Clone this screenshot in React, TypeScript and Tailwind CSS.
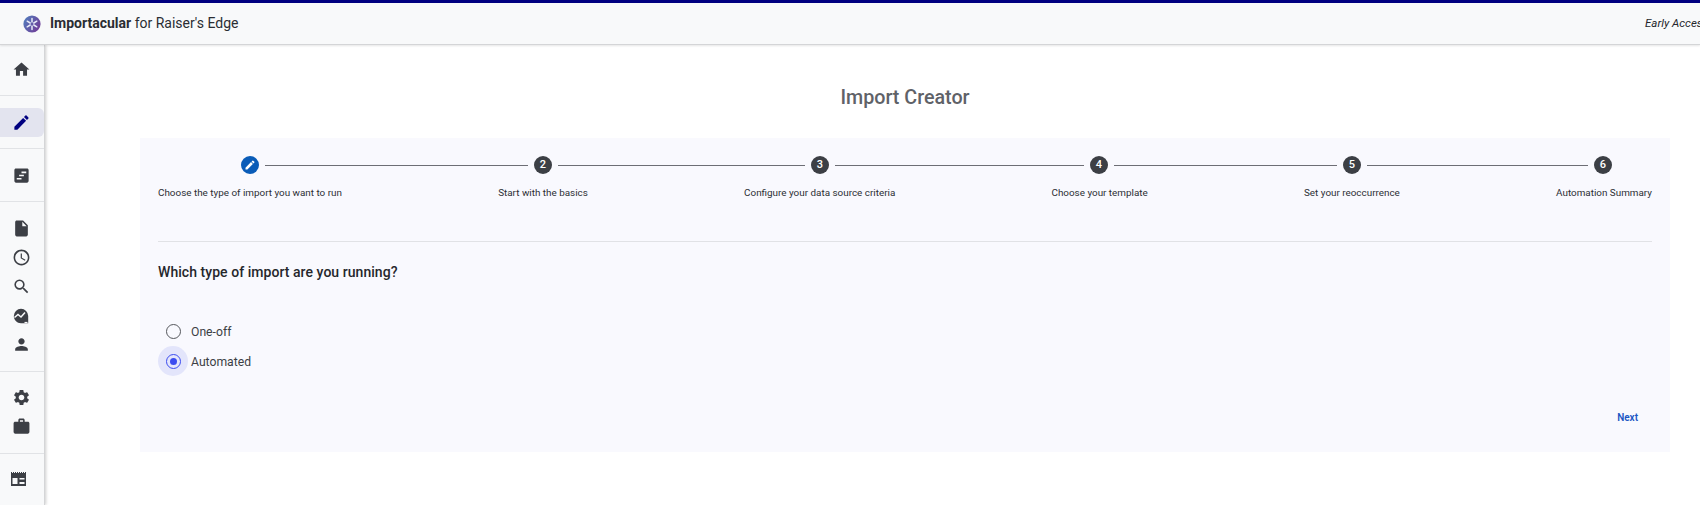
import React from 'react';
import {
  MdHome,
  MdEdit,
  MdViewTimeline,
  MdInsertDriveFile,
  MdAccessTime,
  MdSearch,
  MdPerson,
  MdSettings,
  MdWork,
} from 'react-icons/md';

const ChartCircleIcon = () => (
  <svg width="16" height="16" viewBox="0 0 16 16" className="text-[#3c3f45]">
    <path fill="currentColor" d="M8 0.8a7.2 7.2 0 0 0-7.2 7.2c0 4 3.2 7.2 7.2 7.2h7.2V8A7.2 7.2 0 0 0 8 0.8z" />
    <path fill="none" stroke="#f8f9fa" strokeWidth="1.5" d="M1.5 9.5l3.5-3 3 2.5 4-4.5" />
    <path fill="none" stroke="#f8f9fa" strokeWidth="1.2" d="M11.5 14.5h3" />
  </svg>
);

const LayoutIcon = () => (
  <svg width="15" height="14" viewBox="0 0 15 14" className="text-[#3c3f45]">
    <path fill="currentColor" d="M0 0h1v1h1V0h1v1h1V0h1v1h1V0h1v1h1V0h1v1h1V0h1v1h1V0h1v1h1V0h1v14H0z" />
    <path fill="#f8f9fa" d="M1.5 6h5v6h-5zM8.5 6h5v1.5h-5zM8.5 10h5v2h-5z" />
  </svg>
);

const LogoIcon = () => (
  <svg width="18" height="18" viewBox="0 0 18 18">
    <defs>
      <linearGradient id="logoGrad" x1="0" y1="0" x2="1" y2="0.6">
        <stop offset="0" stopColor="#4f82c0" />
        <stop offset="1" stopColor="#6f3f98" />
      </linearGradient>
    </defs>
    <circle cx="9" cy="9" r="8.6" fill="url(#logoGrad)" />
    <path
      stroke="#e8ecf8"
      strokeWidth="1.5"
      strokeLinecap="round"
      d="M9 3.5v3.5M9 11v3.5M4.2 6.2l3 1.8M10.8 10l3 1.8M4.2 11.8l3-1.8M10.8 8l3-1.8"
    />
  </svg>
);

const sideSections = [
  { pad: 'pt-[10px] pb-[11px]', items: [{ icon: <MdHome size={19} />, key: 'home' }] },
  {
    pad: 'pt-3 pb-[11px]',
    items: [{ icon: <MdEdit size={19} className="text-[#000080]" />, key: 'edit', active: true }],
  },
  { pad: 'pt-3 pb-[11px]', items: [{ icon: <MdViewTimeline size={19} />, key: 'timeline' }] },
  {
    pad: 'py-3',
    items: [
      { icon: <MdInsertDriveFile size={19} />, key: 'file' },
      { icon: <MdAccessTime size={19} />, key: 'clock' },
      { icon: <MdSearch size={19} />, key: 'search' },
      { icon: <ChartCircleIcon />, key: 'chart' },
      { icon: <MdPerson size={19} />, key: 'person' },
    ],
  },
  {
    pad: 'pt-[11px] pb-3',
    items: [
      { icon: <MdSettings size={19} />, key: 'settings' },
      { icon: <MdWork size={19} />, key: 'case' },
    ],
  },
];

const steps = [
  { label: 'Choose the type of import you want to run', line: 'w-[263px]' },
  { label: 'Start with the basics', line: 'w-[247px]' },
  { label: 'Configure your data source criteria', line: 'w-[249px]' },
  { label: 'Choose your template', line: 'w-[223px]' },
  { label: 'Set your reoccurrence', line: 'w-[221px]' },
  { label: 'Automation Summary', line: '' },
];

const App: React.FC = () => {
  return (
    <div className="h-[505px] w-[1700px] overflow-hidden bg-white font-['Roboto',sans-serif] text-[#25272c]">
      {/* Header */}
      <div className="h-[3px] bg-[#000080]" />
      <header className="relative z-10 flex h-[42px] items-center justify-between overflow-hidden border-b border-[#d4d5d7] bg-[#f8f9fa] pl-[23px] shadow-[0_1px_2px_rgba(0,0,0,0.1)]">
        <div className="flex items-center gap-[9px]">
          <LogoIcon />
          <div className="text-[14px] text-[#2a2d33]">
            <span className="font-bold">Importacular</span> for Raiser's Edge
          </div>
        </div>
        <div className="w-[55px] shrink-0 text-[11.5px] whitespace-nowrap italic">Early Access</div>
      </header>

      <div className="flex h-[460px]">
        {/* Sidebar */}
        <aside className="flex w-[45px] shrink-0 flex-col border-r border-[#d4d5d7] bg-[#f8f9fa] text-[#3c3f45] shadow-[1px_0_3px_rgba(0,0,0,0.2)]">
          {sideSections.map((section, i) => (
            <div key={i} className={`flex flex-col border-b border-[#e1e3e6] ${section.pad}`}>
              {section.items.map((item) => (
                <div
                  key={item.key}
                  className={`flex h-[29px] items-center justify-center pr-[2px] ${
                    item.active ? 'rounded-r-md bg-[#e3e4ef]' : ''
                  }`}
                >
                  {item.icon}
                </div>
              ))}
            </div>
          ))}
          <div className="mt-[18px] flex h-[14px] pl-[11px]">
            <LayoutIcon />
          </div>
        </aside>

        {/* Main */}
        <main className="flex-1 pt-[40px] pr-[30px] pl-[95px]">
          <h1 className="text-center text-[19.7px] leading-[26px] font-medium text-[#5f6268]">Import Creator</h1>
          <section className="mt-[27px] h-[314px] bg-[#f9f9fe] px-[18px] pt-[18px]">
            {/* Stepper */}
            <div className="flex items-center pl-[83px]">
              {steps.map((step, i) => (
                <React.Fragment key={step.label}>
                  <div
                    className={`flex h-[18px] w-[18px] shrink-0 items-center justify-center rounded-full text-[11px] font-medium text-white ${
                      i === 0 ? 'bg-[#0a5cb8]' : 'bg-[#3c3f45]'
                    }`}
                  >
                    {i === 0 ? <MdEdit size={12} /> : i + 1}
                  </div>
                  {step.line && <div className={`mx-[6px] h-px ${step.line} bg-[#6d6e75]`} />}
                </React.Fragment>
              ))}
            </div>
            <div className="mt-[11px] flex justify-between text-[9.9px] leading-[16px] whitespace-nowrap text-[#2c2f34]">
              {steps.map((step) => (
                <span key={step.label}>{step.label}</span>
              ))}
            </div>
            <div className="mt-[40px] h-px bg-[#e1e2e6]" />

            <h2 className="mt-[21px] text-[14px] leading-[18px] font-medium tracking-[0.05px] text-[#25272c]">
              Which type of import are you running?
            </h2>

            {/* Radios */}
            <div className="mt-[35px] flex flex-col text-[12.2px] text-[#3c3f45]">
              <label className="flex h-[30px] items-center">
                <span className="flex h-[30px] w-[30px] items-center justify-center">
                  <span className="h-[15px] w-[15px] rounded-full border-[1.5px] border-[#55575c]" />
                </span>
                <span className="mt-[2px] ml-[3px]">One-off</span>
              </label>
              <label className="flex h-[30px] items-center">
                <span className="flex h-[30px] w-[30px] items-center justify-center rounded-full bg-[#e3e5fb]">
                  <span className="flex h-[15px] w-[15px] items-center justify-center rounded-full border-[1.5px] border-[#3b4cf0]">
                    <span className="h-[7px] w-[7px] rounded-full bg-[#3b4cf0]" />
                  </span>
                </span>
                <span className="mt-[2px] ml-[3px]">Automated</span>
              </label>
            </div>

            <div className="mt-[34px] flex justify-end pr-[14px]">
              <span className="text-[10px] leading-[16px] font-semibold text-[#1a56c4]">Next</span>
            </div>
          </section>
        </main>
      </div>
    </div>
  );
};

export default App;
